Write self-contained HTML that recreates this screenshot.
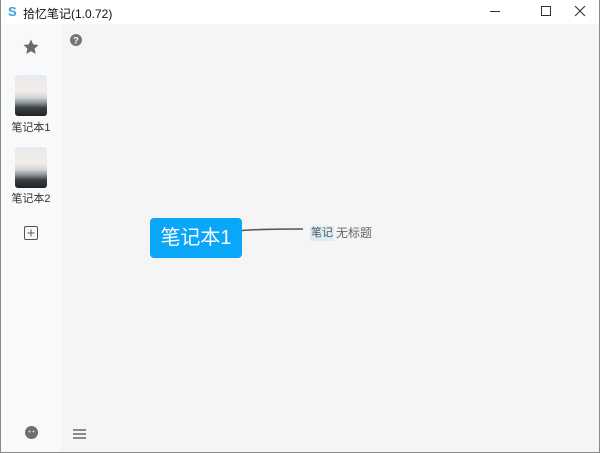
<!DOCTYPE html>
<html><head><meta charset="utf-8"><style>
*{margin:0;padding:0;box-sizing:border-box}
body{width:600px;height:453px;position:relative;background:#fff;font-family:"Liberation Sans","Noto Sans CJK SC",sans-serif;overflow:hidden}
.frame{position:absolute;left:0;top:0;width:600px;height:453px;border:1px solid #8a8a8a;border-top:none}
.title{position:absolute;left:0;top:0;width:600px;height:24px;background:#fff;font-size:12px;color:#111}
.side{position:absolute;left:1px;top:24px;width:60px;height:428px;background:#f8f9fa}
.main{position:absolute;left:61px;top:24px;width:538px;height:428px;background:#f5f5f5}
.thumb{position:absolute;left:15px;width:32px;height:41px;border-radius:3px;background:linear-gradient(#e6eaee 0%,#f3ece9 40%,#d0d6da 55%,#8a9398 68%,#3a3f42 80%,#222 100%)}
.lbl{position:absolute;left:0;width:62px;text-align:center;font-size:11px;color:#333}
</style></head><body>
<div class="title">
 <span style="position:absolute;left:8px;top:4px;color:#3aa0e0;font-weight:bold;font-size:13px">S</span>
 <span style="position:absolute;left:23px;top:5px">拾忆笔记(1.0.72)</span>
 <div style="position:absolute;left:490px;top:11px;width:10px;height:1px;background:#333"></div>
 <div style="position:absolute;left:541px;top:6px;width:10px;height:10px;border:1px solid #333"></div>
 <svg style="position:absolute;left:574px;top:5px" width="12" height="12"><path d="M1 1L11 11M11 1L1 11" stroke="#333" stroke-width="1.1"/></svg>
</div>
<div class="side"></div>
<div class="main"></div>
<svg style="position:absolute;left:22px;top:38px" width="18" height="18" viewBox="0 0 24 24"><path d="M12 2l3 6.5 7 .8-5.2 4.8 1.5 7L12 17.6 5.7 21.1l1.5-7L2 9.3l7-.8z" fill="#6b6b6b"/></svg>
<div class="thumb" style="top:75px"></div>
<div class="lbl" style="top:119px">笔记本1</div>
<div class="thumb" style="top:147px"></div>
<div class="lbl" style="top:190px">笔记本2</div>
<svg style="position:absolute;left:24px;top:226px" width="14" height="14"><rect x="0.5" y="0.5" width="13" height="13" rx="1.5" fill="none" stroke="#555"/><path d="M7 3.5v7M3.5 7h7" stroke="#555"/></svg>
<svg style="position:absolute;left:25px;top:426px" width="13" height="13"><circle cx="6.5" cy="6.5" r="6.5" fill="#6e6e6e"/><circle cx="4.5" cy="5.5" r="1" fill="#ddd"/><circle cx="8.5" cy="5.5" r="1" fill="#ddd"/></svg>
<svg style="position:absolute;left:70px;top:34px" width="12" height="12"><circle cx="6" cy="6" r="6" fill="#777"/><text x="6" y="9.5" font-size="9" font-weight="bold" text-anchor="middle" fill="#fff" font-family="Liberation Sans">?</text></svg>
<svg style="position:absolute;left:73px;top:428px" width="13" height="12"><path d="M0 2h13M0 6h13M0 10h13" stroke="#666" stroke-width="1.6"/></svg>
<svg style="position:absolute;left:240px;top:225px" width="70" height="10"><path d="M2 5.5C20 4 40 4 63 4" stroke="#555" stroke-width="1.5" fill="none"/></svg>
<div style="position:absolute;left:150px;top:218px;width:92px;height:40px;background:#0aa6f7;border-radius:4px;color:#fff;font-size:20px;line-height:40px;text-align:center">笔记本1</div>
<div style="position:absolute;left:310px;top:226px;width:24px;height:15px;background:#dbecf7;font-size:11px;line-height:15px;text-align:center;color:#555">笔记</div>
<div style="position:absolute;left:336px;top:226px;font-size:12px;line-height:15px;color:#666">无标题</div>
<div class="frame"></div>
</body></html>
